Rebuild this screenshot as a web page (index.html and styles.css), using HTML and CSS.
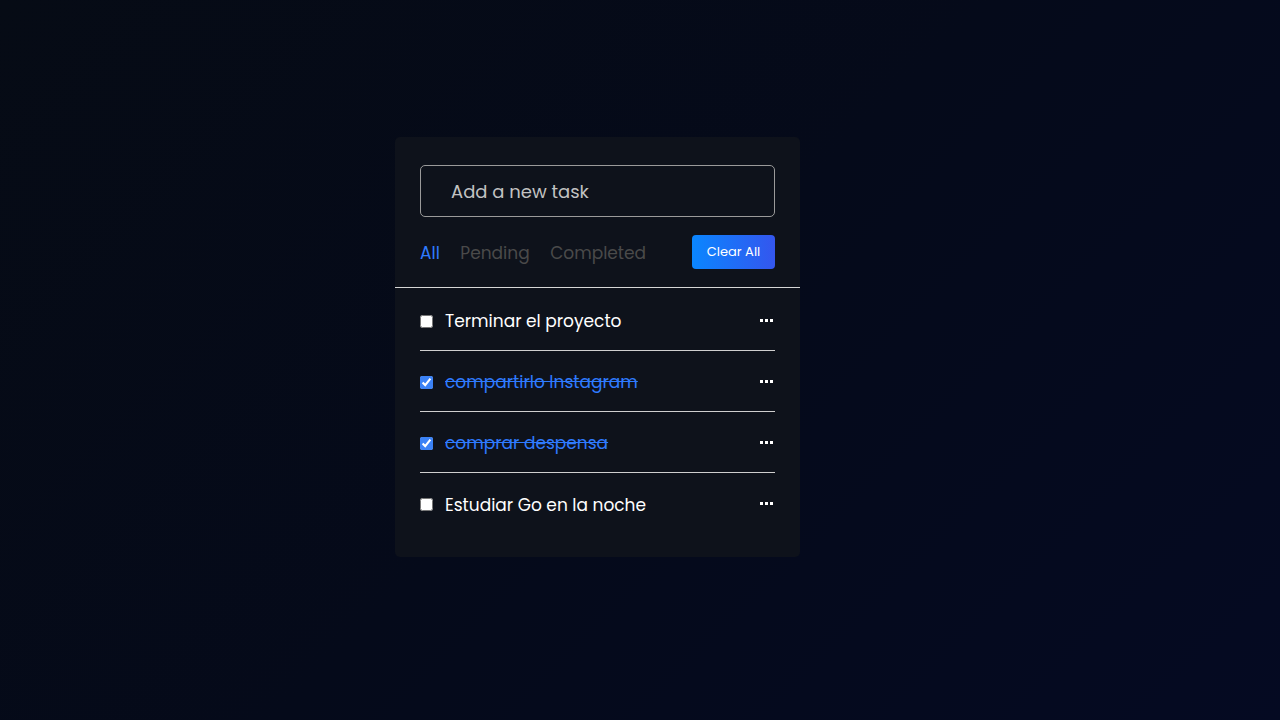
FILE: index.html
```html
<!DOCTYPE html>
<html lang="es">
<head>
<meta charset="utf-8">
<title>Todo</title>
<link rel="stylesheet" href="styles.css">
</head>
<body>
<main class="stage">
  <section class="card">
    <div class="top">
      <input class="task-input" type="text" placeholder="Add a new task">
      <div class="controls">
        <nav class="filters">
          <span class="filter active">All</span>
          <span class="filter">Pending</span>
          <span class="filter">Completed</span>
        </nav>
        <button class="clear-btn">Clear All</button>
      </div>
    </div>
    <ul class="tasks">
      <li class="task">
        <label class="task-label"><input type="checkbox" class="check"><span class="task-text">Terminar el proyecto</span></label>
        <span class="dots"><i></i><i></i><i></i></span>
      </li>
      <li class="task done">
        <label class="task-label"><input type="checkbox" class="check" checked><span class="task-text">compartirlo Instagram</span></label>
        <span class="dots"><i></i><i></i><i></i></span>
      </li>
      <li class="task done">
        <label class="task-label"><input type="checkbox" class="check" checked><span class="task-text">comprar despensa</span></label>
        <span class="dots"><i></i><i></i><i></i></span>
      </li>
      <li class="task">
        <label class="task-label"><input type="checkbox" class="check"><span class="task-text">Estudiar Go en la noche</span></label>
        <span class="dots"><i></i><i></i><i></i></span>
      </li>
    </ul>
  </section>
</main>
</body>
</html>
```
FILE: styles.css
```css
* { box-sizing: border-box; }
html, body { margin: 0; height: 100%; }
body {
  font-family: "Poppins", "Open Sans", "Noto Sans", sans-serif;
  background: linear-gradient(135deg, #060b15 0%, #050a1a 50%, #050a22 100%);
  color: #fff;
}
.stage {
  height: 720px;
  display: flex;
  justify-content: flex-start;
  padding: 137px 0 0 395px;
}
.card {
  width: 405px;
  height: 420px;
  background: #0e121b;
  border-radius: 5px;
}
.top {
  padding: 28px 25px 18px;
  border-bottom: 1px solid #d6d6d6;
}
.task-input {
  display: block;
  width: 100%;
  height: 52px;
  background: transparent;
  border: 1px solid #9a9a9a;
  border-radius: 5px;
  padding: 0 30px;
  font-family: inherit;
  font-size: 18px;
  color: #fff;
  outline: none;
}
.task-input::placeholder { color: #c2c2c2; }
.controls {
  margin-top: 18px;
  display: flex;
  justify-content: space-between;
  align-items: center;
}
.filters { display: flex; gap: 20.5px; padding-top: 1px; }
.filter { font-size: 17px; color: #4a4a4a; }
.filter.active { color: #2f7bff; }
.clear-btn {
  width: 83px;
  height: 34px;
  border: none;
  border-radius: 4px;
  background: linear-gradient(90deg, #0a86ff 0%, #3456ee 100%);
  color: #fff;
  font-family: inherit;
  font-size: 13px;
  padding: 0;
}
.tasks {
  list-style: none;
  margin: 0;
  padding: 2px 25px 0;
}
.task {
  height: 61px;
  padding-top: 2px;
  display: flex;
  align-items: center;
  justify-content: space-between;
  border-bottom: 1px solid #cfcfcf;
}
.task:last-child { border-bottom: none; }
.task-label { display: flex; align-items: center; gap: 12px; }
.check {
  width: 13px;
  height: 13px;
  margin: 0;
  accent-color: #3b82f6;
}
.task-text { font-size: 17px; color: #fff; }
.task.done .task-text {
  color: #2f7bff;
  text-decoration: line-through;
}
.dots {
  display: flex;
  gap: 2px;
  margin: 0 2px 2px 0;
}
.dots i {
  display: block;
  width: 3px;
  height: 3px;
  background: #fff;
}
```
